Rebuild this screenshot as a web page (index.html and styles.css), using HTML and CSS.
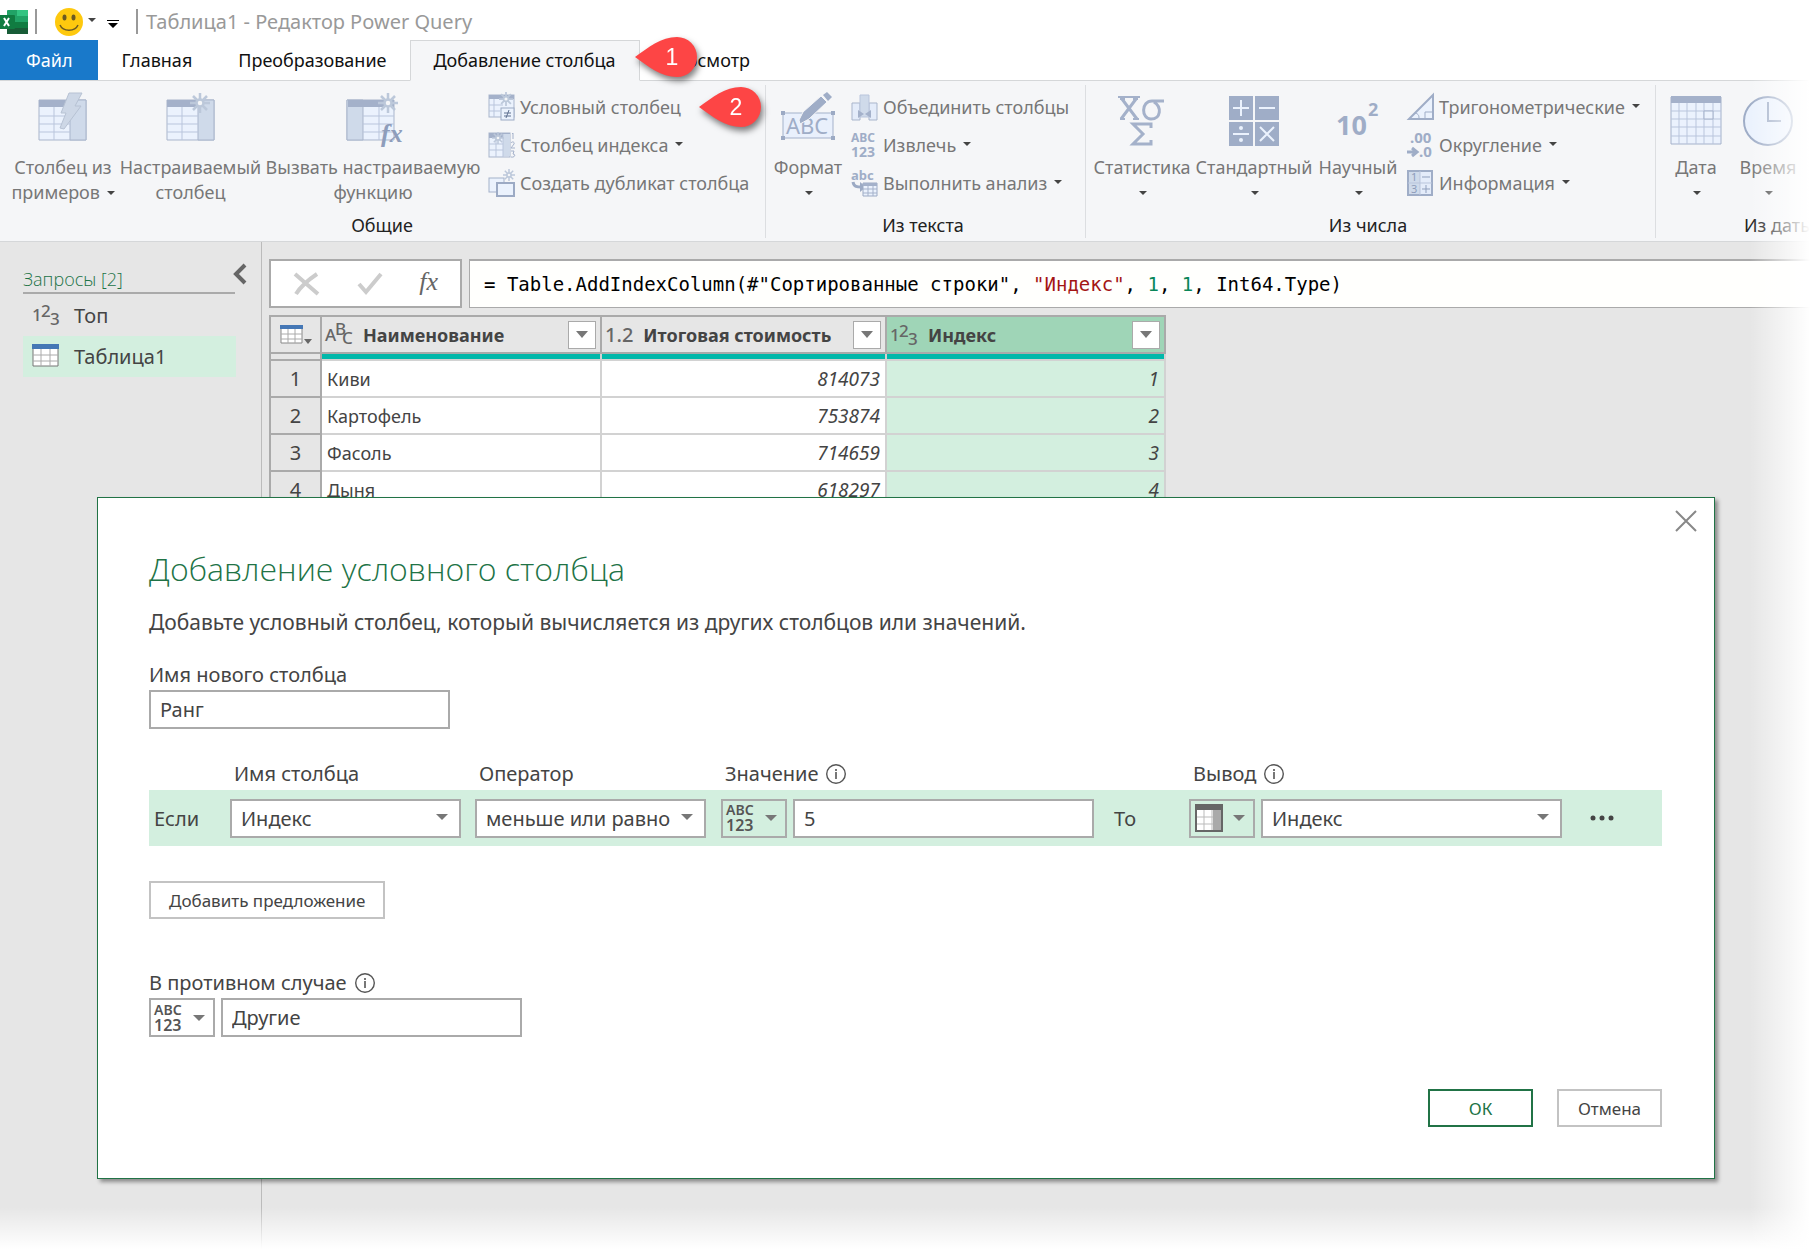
FILE: index.html
```html
<!DOCTYPE html>
<html lang="ru">
<head>
    <meta charset="UTF-8">
    <meta name="viewport" content="width=device-width, initial-scale=1.0">
    <title>Таблица1 - Редактор Power Query</title>
    <link rel="stylesheet" href="styles.css">
</head>
<body>
<div class="window">

<!-- Title bar -->
<header class="titlebar">
    <svg class="logo" width="28" height="24" viewBox="0 0 28 24">
        <rect x="7" width="21" height="24" rx="1" fill="#21a366"/>
        <rect x="17" width="11" height="6" fill="#33c481"/>
        <rect x="7" y="6" width="10" height="6" fill="#21a366"/>
        <rect x="7" y="12" width="10" height="6" fill="#107c41"/>
        <rect x="17" y="12" width="11" height="6" fill="#107c41"/>
        <rect x="7" y="18" width="21" height="6" fill="#185c37"/>
        <rect x="-2" y="5" width="17" height="14" rx="1" fill="#107c41"/>
        <path d="M4 8l5 8M9 8l-5 8" stroke="#fff" stroke-width="2"/>
    </svg>
    <span class="bar"></span>
    <button class="smile" aria-label="Отправить улыбку">
        <svg width="28" height="28" viewBox="0 0 28 28">
            <circle cx="14" cy="14" r="14" fill="#fec90e"/>
            <ellipse cx="9.500" cy="9.500" rx="2" ry="3" fill="#6b5a22"/>
            <ellipse cx="18.500" cy="9.500" rx="2" ry="3" fill="#6b5a22"/>
            <path d="M5 17c3 7 15 7 18 0" fill="none" stroke="#6b5a22" stroke-width="1.500"/>
        </svg>
        <span class="caret"></span>
    </button>
    <button class="customize" aria-label="Настройка панели">
        <svg width="12" height="8" viewBox="0 0 12 8"><path d="M0 0h12v1H0zM1 3h10L6 8z" fill="#000"/></svg>
    </button>
    <span class="bar"></span>
    <span class="title">Таблица1 - Редактор Power Query</span>
</header>

<!-- Tabs -->
<nav class="tabs">
    <button class="tab tab-file">Файл</button>
    <button class="tab">Главная</button>
    <button class="tab">Преобразование</button>
    <button class="tab tab-active">Добавление столбца</button>
    <button class="tab">Просмотр</button>
</nav>

<!-- Ribbon -->
<section class="ribbon">
    <div class="group">
        <div class="tools">
            <button class="big big-1">
                <svg width="50" height="56" viewBox="0 0 50 56">
                    <use href="#tbl"/>
                    <path d="M31 0h13l-7 13h6L26 36l-4-1 6-15h-5z" fill="#cdd7e6" stroke="#b7c2d3"/>
                </svg>
                <span>Столбец из<br>примеров <i class="caret"></i></span>
            </button>
            <button class="big big-2">
                <svg width="50" height="56" viewBox="0 0 50 56"><use href="#tbl"/><use href="#spark" x="34" y="10"/></svg>
                <span>Настраиваемый<br>столбец</span>
            </button>
            <button class="big big-3">
                <svg width="50" height="56" viewBox="0 0 50 56">
                    <use href="#tbl" transform="matrix(-1 0 0 1 47 0)"/>
                    <path d="M0 7h40v7H0z" fill="#a4b1ca"/>
                    <use href="#spark" x="40" y="10"/>
                    <text x="33" y="49" class="fx-text">fx</text>
                </svg>
                <span>Вызвать настраиваемую<br>функцию</span>
            </button>
            <div class="small-col small-col-1">
                <button class="small">
                    <svg width="27" height="28" viewBox="0 0 27 28">
                        <rect x="1" y="2" width="25" height="22" fill="#ebf2fd" stroke="#a9b5cb"/>
                        <path d="M1 2h25v4H1z" fill="#a4b1ca"/>
                        <path d="M6 6v18M1 12h14M1 18h11" stroke="#b9c5dc" fill="none"/>
                        <use href="#spark" transform="translate(18 6) scale(.7)"/>
                        <rect x="13" y="15" width="13" height="12" fill="#ebf2fd" stroke="#9caac4"/>
                        <path d="M16 20h7M16 23h7M21 17l-3 8" stroke="#5f7090" fill="none"/>
                    </svg>
                    Условный столбец
                </button>
                <button class="small">
                    <svg width="27" height="28" viewBox="0 0 27 28">
                        <rect x="1" y="2" width="21" height="24" fill="#ebf2fd" stroke="#a9b5cb"/>
                        <path d="M1 2h21v5H1z" fill="#a4b1ca"/>
                        <path d="M15 3h7v22h-7z" fill="#cfdaea"/>
                        <path d="M8 7v19M15 3v23M1 13h14M1 19h14" stroke="#b9c5dc" fill="none"/>
                        <use href="#spark" transform="translate(10 7) scale(.6)"/>
                        <path d="M24 3l1-1v6M23 12c1-2 4-1 3 1l-3 4h4M23 20h3l-1 3c3 0 2 4-2 3" fill="none" stroke="#a4b1ca"/>
                    </svg>
                    Столбец индекса <i class="caret"></i>
                </button>
                <button class="small">
                    <svg width="27" height="28" viewBox="0 0 27 28">
                        <rect x="1" y="9" width="15" height="14" fill="#ebf2fd" stroke="#a4b1ca"/>
                        <rect x="9" y="14" width="17" height="13" fill="#ebf2fd" stroke="#9caac4" stroke-width="2"/>
                        <use href="#spark" transform="translate(21 6) scale(.6)"/>
                    </svg>
                    Создать дубликат столбца
                </button>
            </div>
        </div>
        <div class="caption">Общие</div>
    </div>

    <div class="group">
        <div class="tools">
            <button class="big big-4">
                <svg width="54" height="56" viewBox="0 0 54 56">
                    <rect x="2" y="20" width="50" height="25" fill="#e9f0fc" stroke="#a4b1ca"/>
                    <path d="M0 18h4v4H0zM50 18h4v4h-4zM0 43h4v4H0zM50 43h4v4h-4z" fill="#9caac4"/>
                    <text x="5" y="41" class="abc-big">ABC</text>
                    <path d="M18 27l4-8L40 3l6 6-18 17-9 5z" fill="#9fadc7" stroke="#f5f6f8"/>
                    <path d="M42 2l4-3 5 5-4 4z" fill="#9fadc7"/>
                </svg>
                <span>Формат<br><i class="caret"></i></span>
            </button>
            <div class="small-col small-col-2">
                <button class="small">
                    <svg width="27" height="28" viewBox="0 0 27 28">
                        <path d="M1 10h8v17H1zM18 10h8v17h-8z" fill="#e4ecfa" stroke="#a9b5cb"/>
                        <path d="M9 2h9v22H9z" fill="#cfdaea" stroke="#b9c5dc"/>
                        <path d="M7 17l6 4-6 4zM20 17l-6 4 6 4z" fill="#a4b1ca"/>
                    </svg>
                    Объединить столбцы
                </button>
                <button class="small">
                    <svg width="27" height="28" viewBox="0 0 27 28"><g class="abc-small"><text x="0" y="11">ABC</text><text x="0" y="26" class="n123">123</text></g></svg>
                    Извлечь <i class="caret"></i>
                </button>
                <button class="small">
                    <svg width="27" height="28" viewBox="0 0 27 28">
                        <text x="0" y="11" class="abc-lower">abc</text>
                        <path d="M2 13c1 5 4 5 9 5" fill="none" stroke="#9caac4" stroke-width="3"/><path d="M9 13l6 5-6 5z" fill="#9caac4"/>
                        <path d="M12 14h14v13H12z" fill="#ebf2fd" stroke="#9caac4"/><path d="M12 14h14v3H12z" fill="#a4b1ca"/>
                        <path d="M12 20h14M12 24h14M17 17v10M22 17v10" stroke="#a4b1ca"/>
                    </svg>
                    Выполнить анализ <i class="caret"></i>
                </button>
            </div>
        </div>
        <div class="caption">Из текста</div>
    </div>

    <div class="group">
        <div class="tools">
            <button class="big big-5">
                <svg width="50" height="56" viewBox="0 0 50 56" fill="none" stroke="#a4b1ca" stroke-width="3">
                    <path d="M1 4h22" stroke-width="2"/>
                    <path d="M5 6l15 20M19 6L4 26"/><path d="M3 26h5M16 26h6M3 6h5M16 6h5" stroke-width="2"/>
                    <path d="M47 8H35c-11 0-11 18-1 18s11-12 3-17"/>
                    <path d="M34 35v-4H16l10 10-10 10h18v-4"/>
                </svg>
                <span>Статистика<br><i class="caret"></i></span>
            </button>
            <button class="big big-6">
                <svg width="50" height="56" viewBox="0 0 50 56">
                    <path d="M0 3h24v24H0zM26 3h24v24H26zM0 29h24v24H0zM26 29h24v24H26z" fill="#9fadc7"/>
                    <path d="M12 7v16M4 15h16M30 15h16M4 41h16M31 34l14 14M45 34L31 48" stroke="#ebf2fd" stroke-width="2"/>
                    <circle cx="12" cy="35" r="2" fill="#ebf2fd"/><circle cx="12" cy="47" r="2" fill="#ebf2fd"/>
                </svg>
                <span>Стандартный<br><i class="caret"></i></span>
            </button>
            <button class="big big-7">
                <svg width="46" height="56" viewBox="0 0 46 56"><text x="1" y="42" class="ten">10</text><text x="33" y="23" class="pow">2</text></svg>
                <span>Научный<br><i class="caret"></i></span>
            </button>
            <div class="small-col small-col-3">
                <button class="small">
                    <svg width="27" height="28" viewBox="0 0 27 28" fill="none" stroke="#9fadc7">
                        <path d="M2 26L26 2v24z" fill="#ebf2fd" stroke-width="2"/>
                        <path d="M18 26v-7h8M8 20c4 1 4 3 4 6"/>
                    </svg>
                    Тригонометрические <i class="caret"></i>
                </button>
                <button class="small">
                    <svg width="27" height="28" viewBox="0 0 27 28">
                        <g class="round-text"><text x="3" y="12">.00</text><text x="12" y="26">.0</text></g>
                        <path d="M0 21h9M5 17l5 4-5 4" fill="none" stroke="#9fadc7" stroke-width="3"/>
                    </svg>
                    Округление <i class="caret"></i>
                </button>
                <button class="small">
                    <svg width="27" height="28" viewBox="0 0 27 28">
                        <path d="M1 2h24v24H1z" fill="#e4ecfa" stroke="#9fadc7" stroke-width="2"/><path d="M2 3h11v22H2z" fill="#cfdaea"/>
                        <path d="M13 2v24M1 14h24" stroke="#b9c5dc"/>
                        <path d="M15 8h8M15 20h8M19 16v8" stroke="#8f9fbd"/>
                        <g class="info-num"><text x="4" y="12">1</text><text x="4" y="24">3</text></g>
                    </svg>
                    Информация <i class="caret"></i>
                </button>
            </div>
        </div>
        <div class="caption">Из числа</div>
    </div>

    <div class="group group-last">
        <div class="tools">
            <button class="big big-8">
                <svg width="52" height="56" viewBox="0 0 52 56">
                    <path d="M1 4h50v47H1z" fill="#ebf2fd" stroke="#a4b1ca"/>
                    <path d="M1 3h50v7H1z" fill="#a4b1ca"/>
                    <path d="M9 10v41M17 10v41M26 10v41M34 10v41M43 10v41M1 18h50M1 26h50M1 34h50M1 43h50" stroke="#b9c5dc"/>
                    <path d="M34 18h9v8h-9z" fill="#ebf2fd" stroke="#a4b1ca"/>
                </svg>
                <span>Дата<br><i class="caret"></i></span>
            </button>
            <button class="big big-8">
                <svg width="50" height="56" viewBox="0 0 50 56">
                    <circle cx="25" cy="28" r="24" fill="#ebf2fd" stroke="#9fadc7" stroke-width="2"/>
                    <path d="M25 9v19h13" fill="none" stroke="#9fadc7" stroke-width="2"/>
                </svg>
                <span>Время<br><i class="caret"></i></span>
            </button>
        </div>
        <div class="caption">Из даты и времени</div>
    </div>
</section>

<main class="workspace">
    <!-- Query list -->
    <aside class="queries">
        <div class="queries-head">
            <span>Запросы [2]</span>
            <button class="collapse" aria-label="Свернуть">
                <svg width="14" height="20" viewBox="0 0 14 20"><path d="M12 1L3 10l9 9" fill="none" stroke="#666" stroke-width="4"/></svg>
            </button>
        </div>
        <a class="query" href="#top">
            <svg width="28" height="26" viewBox="0 0 28 26"><use href="#num123"/></svg>Топ
        </a>
        <a class="query query-active" href="#table1">
            <svg width="28" height="24" viewBox="0 0 28 24">
                <path d="M1 1h25v21H1z" fill="#fff" stroke="#777"/><path d="M0 0h27v5H0z" fill="#4577b5"/>
                <path d="M9 5v17M18 5v17M1 11h25M1 17h25" stroke="#aaa"/>
            </svg>Таблица1
        </a>
    </aside>

    <div class="content">
        <!-- Formula bar -->
        <div class="formula-bar">
            <div class="formula-tools">
                <button aria-label="Отменить"><svg width="28" height="26" viewBox="0 0 28 26"><path d="M2 3l23 20M24 3C15 9 8 15 3 23" fill="none" stroke="#ccc" stroke-width="4"/></svg></button>
                <button aria-label="Принять"><svg width="28" height="26" viewBox="0 0 28 26"><path d="M3 13l7 8L25 3" fill="none" stroke="#ccc" stroke-width="4"/></svg></button>
                <button class="fx" aria-label="Добавить шаг">fx</button>
            </div>
            <div class="formula">= Table.AddIndexColumn(#"Сортированные строки", <span class="str">"Индекс"</span>, <span class="num">1</span>, <span class="num">1</span>, Int64.Type)</div>
        </div>

        <!-- Data preview -->
        <table class="grid">
            <colgroup><col class="c-num"><col class="c-name"><col class="c-sum"><col class="c-idx"></colgroup>
            <thead>
            <tr>
                <th>
                    <div class="corner">
                        <svg width="32" height="20" viewBox="0 0 32 20">
                            <path d="M1 1h21v17H1z" fill="#fff" stroke="#888"/><path d="M0 0h23v4H0z" fill="#4577b5"/>
                            <path d="M8 4v14M15 4v14M1 9h21M1 14h21" stroke="#aaa"/><path d="M24 14h8l-4 5z" fill="#666"/>
                        </svg>
                    </div>
                </th>
                <th><div class="head"><svg width="28" height="26" viewBox="0 0 28 26" class="glyph"><text x="0" y="19">A</text><text x="10" y="13">B</text><text x="17" y="22">C</text></svg><span>Наименование</span><button class="filter" aria-label="Фильтр"></button></div></th>
                <th><div class="head"><span class="decimal">1.2</span><span>Итоговая стоимость</span><button class="filter" aria-label="Фильтр"></button></div></th>
                <th class="sel"><div class="head"><svg width="28" height="26" viewBox="0 0 28 26"><use href="#num123"/></svg><span>Индекс</span><button class="filter" aria-label="Фильтр"></button></div></th>
            </tr>
            </thead>
            <tbody>
            <tr class="quality"><td></td><td></td><td></td><td></td></tr>
            <tr><td>1</td><td>Киви</td><td>814073</td><td>1</td></tr>
            <tr><td>2</td><td>Картофель</td><td>753874</td><td>2</td></tr>
            <tr><td>3</td><td>Фасоль</td><td>714659</td><td>3</td></tr>
            <tr><td>4</td><td>Дыня</td><td>618297</td><td>4</td></tr>
            </tbody>
        </table>
    </div>
</main>

<div class="fade"></div>

<!-- Dialog -->
<form class="dialog">
    <button type="button" class="close" aria-label="Закрыть"><svg width="20" height="20" viewBox="0 0 20 20"><path d="M0 0l20 20M20 0L0 20" stroke="#888" stroke-width="2"/></svg></button>
    <h1>Добавление условного столбца</h1>
    <p class="desc">Добавьте условный столбец, который вычисляется из других столбцов или значений.</p>

    <label class="field-label" for="new-name">Имя нового столбца</label>
    <input class="box wide" id="new-name" type="text" value="Ранг">

    <div class="rule rule-head">
        <span></span>
        <label for="col">Имя столбца</label>
        <label for="op">Оператор</label>
        <label for="val">Значение <svg width="20" height="20" viewBox="0 0 20 20"><use href="#info"/></svg></label>
        <label for="out">Вывод <svg width="20" height="20" viewBox="0 0 20 20"><use href="#info"/></svg></label>
    </div>
    <div class="rule rule-row">
        <span class="word-if">Если</span>
        <div class="select"><select class="box" id="col"><option>Индекс</option></select></div>
        <div class="select"><select class="box" id="op"><option>меньше или равно</option></select></div>
        <div class="pair">
            <button type="button" class="type" aria-label="Тип значения"><svg width="30" height="30" viewBox="0 0 30 30" class="type-text"><text x="0" y="12">ABC</text><text x="0" y="28" class="type-num">123</text></svg><i class="arrow"></i></button>
            <input class="box wide" id="val" type="text" value="5">
            <span class="word-then">То</span>
        </div>
        <div class="pair">
            <button type="button" class="type" aria-label="Тип вывода">
                <svg width="30" height="30" viewBox="0 0 30 30"><path d="M2 2h26v26H2z" fill="#fff" stroke="#666" stroke-width="2"/><path d="M1 1h28v6H1z" fill="#666"/><path d="M19 7h8v20h-8z" fill="#aaa"/><path d="M10 7v20M18 7v20M3 14h16M3 21h16" stroke="#bbb"/></svg>
                <i class="arrow"></i>
            </button>
            <div class="select wide"><select class="box" id="out"><option>Индекс</option></select></div>
            <button type="button" class="more" aria-label="Ещё"><svg width="26" height="6" viewBox="0 0 26 6" fill="#444"><circle cx="4" cy="3" r="2.500"/><circle cx="13" cy="3" r="2.500"/><circle cx="22" cy="3" r="2.500"/></svg></button>
        </div>
    </div>

    <button type="button" class="btn add">Добавить предложение</button>

    <label class="field-label else" for="else-val">В противном случае <svg width="20" height="20" viewBox="0 0 20 20"><use href="#info"/></svg></label>
    <div class="pair">
        <button type="button" class="type" aria-label="Тип значения"><svg width="30" height="30" viewBox="0 0 30 30" class="type-text"><text x="0" y="12">ABC</text><text x="0" y="28" class="type-num">123</text></svg><i class="arrow"></i></button>
        <input class="box wide" id="else-val" type="text" value="Другие">
    </div>

    <div class="actions">
        <button type="button" class="btn btn-ok">ОК</button>
        <button type="button" class="btn">Отмена</button>
    </div>
</form>

<!-- Step markers -->
<div class="pin pin-1"><svg width="62" height="40" viewBox="0 0 62 40"><use href="#drop"/></svg><span>1</span></div>
<div class="pin pin-2"><svg width="62" height="40" viewBox="0 0 62 40"><use href="#drop"/></svg><span>2</span></div>

</div>

<!-- Shared shapes -->
<svg class="defs" width="0" height="0">
    <defs>
        <g id="tbl">
            <path d="M1 7h47v40H1z" fill="#ebf2fd" stroke="#a9b5cb"/>
            <path d="M1 7h31v7H1z" fill="#a4b1ca"/>
            <path d="M32 7h16v40H32z" fill="#cfdaea" stroke="#a9b5cb"/>
            <path d="M16 14v33M1 23h31M1 31h31M1 39h31" stroke="#b9c5dc" stroke-width="1"/>
        </g>
        <g id="spark" stroke="#bcc8da" stroke-width="2.500">
            <path d="M0-10V10M-10 0H10M-7-7L7 7M7-7L-7 7"/>
            <circle r="3.500" fill="#f5f6f8"/>
        </g>
        <g id="num123" class="num123">
            <text x="0" y="19">1</text><text x="9" y="15">2</text><text x="18" y="23">3</text>
        </g>
        <g id="info">
            <circle cx="10" cy="10" r="9.300" fill="none" stroke="#555" stroke-width="1.400"/>
            <path d="M10 8v7M10 5v2" stroke="#777" stroke-width="2"/>
        </g>
        <path id="drop" d="M0 20C14 10 26 0 42 0a20 20 0 0 1 0 40C26 40 14 30 0 20z" fill="#fd4545"/>
    </defs>
</svg>
</body>
</html>
```
FILE: styles.css
```css
* {
    box-sizing: border-box;
}

body {
    margin: 0;
    font-family: "Noto Sans", "Open Sans", sans-serif;
    font-size: 18px;
    color: #444;
    background-color: #fff;
}

button {
    font: inherit;
    color: inherit;
    background: none;
    border: none;
    padding: 0;
}

svg {
    flex: none;
    overflow: visible;
}

.window {
    position: relative;
    min-height: 100vh;
    display: flex;
    flex-direction: column;
    overflow: hidden;
}

.defs {
    position: absolute;
}

/* Down arrow in the ribbon */
.caret {
    display: inline-block;
    border: 4px solid transparent;
    border-top-color: #444;
    border-bottom: none;
    vertical-align: middle;
    margin: 0 0 3px 2px;
}

/* Title bar */
.titlebar {
    height: 40px;
    display: flex;
    align-items: center;
    padding-top: 3px;
}

.bar {
    width: 2px;
    height: 25px;
    background-color: #999;
    margin-left: 7px;
}

.smile {
    display: flex;
    align-items: center;
    margin-left: 18px;
    gap: 3px;
}

.customize {
    margin: 4px 10px 0 11px;
    display: flex;
}

.title {
    font-size: 20px;
    color: #999;
    margin-left: 8px;
}

/* Tabs */
.tabs {
    display: flex;
    height: 41px;
    border-bottom: 1px solid #d5d7d9;
}

.tab {
    padding: 0 22px 2px;
    height: 41px;
    color: #111;
    border: 1px solid transparent;
    white-space: nowrap;
}

.tab-file {
    height: 40px;
    padding: 0 25px 1px;
    color: #fff;
    background-color: #1979ca;
}

.tab-active {
    padding: 0 23px 2px;
    background-color: #f5f6f8;
    border-color: #d5d7d9;
    border-bottom-color: #f5f6f8;
}

/* Ribbon */
.ribbon {
    display: flex;
    background-color: #f5f6f8;
    border-bottom: 1px solid #d5d7d9;
    padding: 4px 0 3px;
}

.group {
    border-right: 1px solid #dcdee1;
    padding: 3px 8px 0;
    flex: none;
}

.group:first-child {
    padding-left: 12px;
}

.group-last {
    border-right: none;
}

.tools {
    display: flex;
    gap: 8px;
    height: 124px;
}

.big {
    display: flex;
    flex-direction: column;
    align-items: center;
    justify-content: flex-start;
    line-height: 25px;
    color: #777;
    white-space: nowrap;
    padding-top: 5px;
    gap: 6px;
}

.big-1 { width: 102px; }
.big-2 { width: 137px; }
.big-3 { width: 212px; }
.big-4 { width: 68px; }
.big-5 { width: 96px; }
.big-6 { width: 112px; }
.big-7 { width: 80px; }
.big-8 { width: 64px; }

.small-col {
    display: flex;
    flex-direction: column;
    padding-left: 1px;
}

.small-col-1 { width: 270px; }
.small-col-2 { width: 227px; }
.small-col-3 { width: 241px; }

.small {
    display: flex;
    align-items: center;
    gap: 5px;
    height: 38px;
    color: #777;
    white-space: nowrap;
}

.caption {
    padding-right: 5px;
    text-align: center;
    line-height: 26px;
    color: #222;
    white-space: nowrap;
}

.group-last .caption {
    padding: 0 0 0 80px;
}

.fx-text {
    font: italic bold 26px "Liberation Serif", serif;
    fill: #8e9dbb;
}

.abc-big {
    font-size: 22px;
    fill: #9fadc7;
}

.abc-small {
    font-size: 12px;
    font-weight: bold;
    fill: #9fadc7;
}

.n123 {
    font-size: 14px;
}

.abc-lower {
    font-size: 13px;
    font-weight: bold;
    fill: #9fadc7;
}

.ten {
    font-size: 27px;
    font-weight: bold;
    fill: #9fadc7;
}

.pow {
    font-size: 18px;
    font-weight: bold;
    fill: #9fadc7;
}

.round-text {
    font-size: 15px;
    font-weight: bold;
    fill: #9fadc7;
}

.info-num {
    font-size: 11px;
    fill: #8e9dbb;
}

/* Workspace */
.workspace {
    flex: 1;
    display: flex;
    background-color: #e6e6e6;
}

.queries {
    width: 262px;
    flex: none;
    border-right: 1px solid #bbb;
    padding: 22px 14px 0 23px;
}

.queries-head {
    display: flex;
    justify-content: space-between;
    align-items: flex-start;
    font-weight: 300;
    font-family: "Open Sans", "Noto Sans", sans-serif;
    color: #217346;
    margin-bottom: 1px;
}

.queries-head span {
    flex: 1;
    line-height: 24px;
    padding: 3px 0 1px;
    border-bottom: 2px solid #aaa;
}

.collapse {
    width: 12px;
}

.collapse svg {
    margin-left: -2px;
}

.query {
    display: flex;
    align-items: center;
    gap: 14px;
    height: 41px;
    width: 213px;
    padding: 0 0 1px 9px;
    font-size: 20px;
    color: #444;
    text-decoration: none;
}

.query-active {
    background-color: #d3efdf;
}

.num123 {
    font-size: 17px;
    font-weight: 500;
    fill: #666;
}

.content {
    flex: 1;
    min-width: 0;
    padding: 17px 0 0 7px;
}

.formula-bar {
    display: flex;
    gap: 7px;
    height: 49px;
}

.formula-tools {
    width: 193px;
    flex: none;
    display: flex;
    align-items: center;
    justify-content: space-between;
    padding: 0 22px 0 22px;
    background-color: #fff;
    border: 2px solid #aaa;
}

.formula-tools svg {
    display: block;
}

.fx {
    font: italic 26px "Liberation Serif", serif;
    line-height: 30px;
    padding-bottom: 4px;
    color: #666;
}

.formula {
    flex: 1;
    padding-left: 14px;
    border: 1px solid #aaa;
    border-top-width: 2px;
    border-right: none;
    background-color: #fffffd;
    font-family: "DejaVu Sans Mono", monospace;
    font-size: 19px;
    line-height: 46px;
    color: #000;
    white-space: nowrap;
}

.str { color: #a31515; }
.num { color: #098658; }

/* Data preview */
.grid {
    width: 895px;
    margin-top: 7px;
    table-layout: fixed;
    border-collapse: collapse;
}

.c-num { width: 51px; }
.c-name { width: 280px; }
.c-sum { width: 285px; }
.c-idx { width: 279px; }

.grid th {
    height: 37px;
    padding: 0;
    border: 2px solid #aaa;
    background-color: #e6e6e6;
}

.grid .sel {
    background-color: #9fd5b7;
}

.corner {
    display: flex;
    justify-content: center;
}

.head {
    display: flex;
    align-items: center;
    gap: 10px;
    padding: 0 4px 0 3px;
}

.head .filter {
    margin-left: auto;
}

.glyph {
    font-size: 17px;
    font-weight: 500;
    fill: #666;
}

.decimal {
    font-weight: 500;
    font-size: 20px;
    color: #666;
}

.filter {
    width: 28px;
    height: 28px;
    display: flex;
    align-items: center;
    justify-content: center;
    background-color: #fff;
    border: 1px solid #aaa;
}

.filter::after {
    content: "";
    border: 6px solid transparent;
    border-top: 7px solid #777;
    border-bottom: none;
}

.grid td {
    height: 37px;
    padding: 0 5px;
    line-height: 24px;
    background-color: #fff;
    border: 2px solid #d2d2d2;
}

.grid td:first-child {
    text-align: center;
    font-size: 20px;
    background-color: #e6e6e6;
    border-color: #aaa;
}

.grid td:nth-child(3),
.grid td:nth-child(4) {
    text-align: right;
    font-size: 19px;
    font-style: italic;
}

.grid td:nth-child(4) {
    background-color: #d3efdf;
}

.grid .quality td {
    height: 7px;
    padding: 0;
    line-height: 0;
    border-top: 2px solid #aaa;
    border-bottom: none;
    background-color: #01b8aa;
}

.grid .quality td:first-child {
    background-color: #e6e6e6;
    border-bottom: 2px solid #aaa;
}

/* White fade along the right and bottom edges */
.fade {
    position: absolute;
    inset: 80px 0 0 0;
    pointer-events: none;
    background:
        linear-gradient(to left, #fff, rgba(255, 255, 255, 0) 60px),
        linear-gradient(to top, #fff, rgba(255, 255, 255, 0) 42px);
}

/* Dialog */
.dialog {
    position: absolute;
    top: 497px;
    left: 97px;
    right: 95px;
    padding: 47px 52px 51px 51px;
    background-color: #fff;
    border: 1px solid #217346;
    box-shadow: 3px 3px 4px rgba(0, 0, 0, 0.4);
    font-size: 20px;
}

.close {
    position: absolute;
    top: 13px;
    right: 18px;
    display: flex;
}

.dialog h1 {
    margin: 0;
    font-family: "Open Sans", "Noto Sans", sans-serif;
    font-size: 32px;
    font-weight: 300;
    line-height: 48px;
    color: #217346;
}

.desc {
    margin: 13px 0 22px;
    font-size: 21px;
    line-height: 32px;
}

.field-label {
    display: flex;
    align-items: center;
    gap: 8px;
    line-height: 30px;
}

.box {
    display: block;
    width: 100%;
    height: 39px;
    padding: 0 9px;
    font: inherit;
    color: #444;
    background-color: #fff;
    border: 2px solid #aaa;
    border-radius: 0;
    appearance: none;
}

.wide {
    width: 301px;
}

.select {
    position: relative;
}

.select::after {
    content: "";
    position: absolute;
    right: 13px;
    top: 15px;
    border: 6px solid transparent;
    border-top-color: #777;
    border-bottom: none;
}

.rule {
    display: grid;
    grid-template-columns: 67px 231px 232px 454px 1fr;
    column-gap: 14px;
    align-items: center;
}

.rule-head {
    margin-top: 29px;
    line-height: 32px;
}

.rule-head label {
    display: flex;
    align-items: center;
    gap: 8px;
    padding-left: 4px;
}

.rule-row {
    height: 56px;
    background-color: #d3efdf;
}

.word-if {
    padding-left: 5px;
}

.word-then {
    margin-left: 14px;
}

.rule-row > .select {
    width: 231px;
}

.pair {
    display: flex;
    align-items: center;
    gap: 6px;
}

.type {
    width: 66px;
    height: 39px;
    display: flex;
    align-items: center;
    justify-content: space-between;
    padding: 0 8px 0 3px;
    border: 2px solid #aaa;
}

.type-text {
    font-size: 14px;
    font-weight: 600;
    fill: #555;
}

.type-num {
    font-size: 16px;
}

.arrow {
    border: 6px solid transparent;
    border-top-color: #777;
    border-bottom: none;
}

.more {
    margin-left: 21px;
    display: flex;
}

.btn {
    min-width: 105px;
    height: 38px;
    padding: 0 18px;
    font-size: 17px;
    border: 2px solid #c3c3c3;
    background-color: #fff;
}

.btn-ok {
    color: #217346;
    border-color: #217346;
}

.add {
    margin-top: 35px;
}

.else {
    margin-top: 49px;
}

.actions {
    display: flex;
    justify-content: flex-end;
    gap: 24px;
    margin-top: 52px;
}

/* Step markers */
.pin {
    position: absolute;
    width: 62px;
    height: 40px;
    filter: drop-shadow(2px 4px 3px rgba(0, 0, 0, 0.5));
}

.pin svg {
    display: block;
}

.pin span {
    position: absolute;
    inset: 0 0 0 12px;
    text-align: center;
    font-family: "Liberation Sans", sans-serif;
    font-size: 23px;
    line-height: 40px;
    color: #fff;
}

.pin-1 {
    top: 37px;
    left: 635px;
}

.pin-2 {
    top: 87px;
    left: 699px;
}
```
